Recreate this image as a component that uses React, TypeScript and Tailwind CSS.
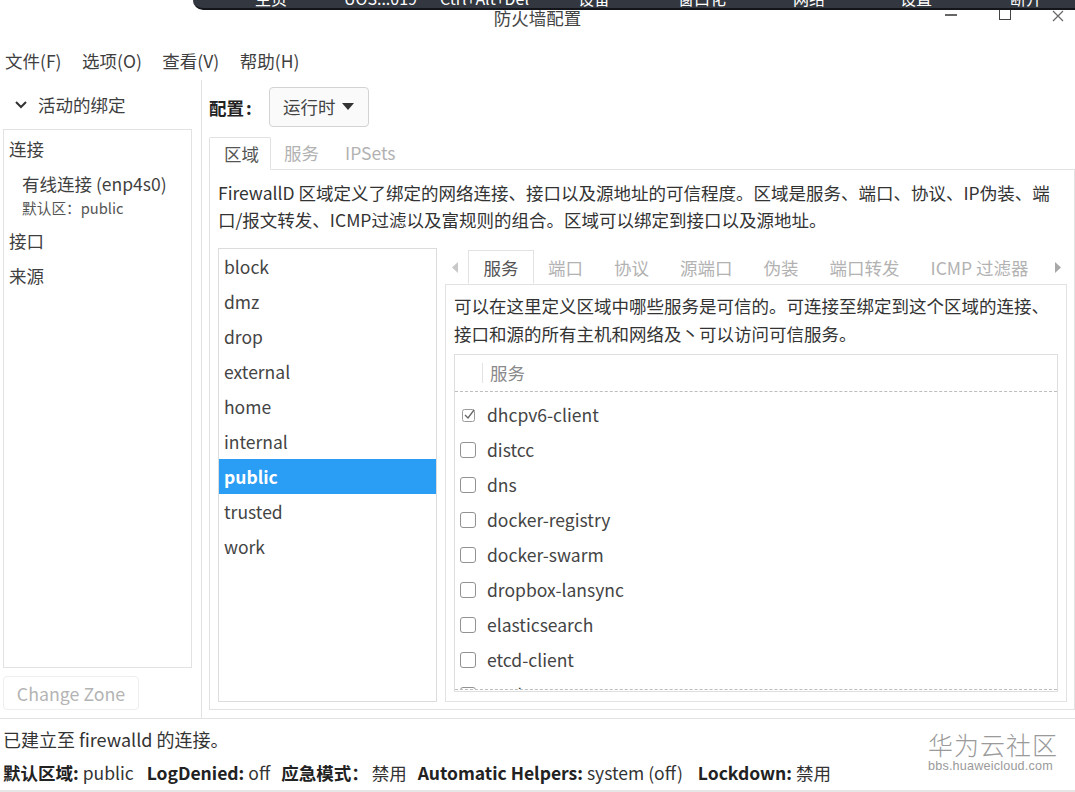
import React from "react";

const font = '"Noto Sans CJK SC", "Noto Sans", sans-serif';

const zones = ["block", "dmz", "drop", "external", "home", "internal", "public", "trusted", "work"];
const services = ["distcc", "dns", "docker-registry", "docker-swarm", "dropbox-lansync", "elasticsearch", "etcd-client"];
const topItems: [string, string][] = [
  ["主页", "w-[89px]"],
  ["UOS...019", "w-[96px]"],
  ["Ctrl+Alt+Del", "w-[138px]"],
  ["设备", "w-[100px]"],
  ["窗口化", "w-[115px]"],
  ["网络", "w-[107px]"],
  ["设置", "w-[110px]"],
  ["断开", "w-[60px]"],
];

function Box() {
  return <span className="w-[16px] h-[16px] rounded-[3px] border-[1.5px] border-[#929292] bg-white shrink-0" />;
}

export default function App() {
  return (
    <div
      className="relative w-[1075px] h-[792px] overflow-hidden bg-white text-[#3f3f3f] text-[17.5px] leading-[26px] flex flex-col"
      style={{ fontFamily: font }}
    >
      {/* remote-control bar overlapping the window */}
      <div className="absolute top-0 left-[193px] right-0 h-[10px] bg-[#33373f] rounded-bl-[10px] overflow-hidden z-10 border-b-2 border-[#14151a] pl-[62px] flex text-white text-[16px] leading-[16px]">
        {topItems.map(([t, w]) => (
          <span key={t} className={`${w} shrink-0 -mt-[10px]`}>{t}</span>
        ))}
      </div>

      {/* title bar */}
      <div className="h-[40px] shrink-0 relative flex justify-center pt-[5px] text-[#444]">
        <span>防火墙配置</span>
        <div className="absolute top-[14px] left-[945px] w-[12px] h-[1.5px] bg-[#666]" />
        <div className="absolute top-[9px] left-[999px] w-[12px] h-[11px] border border-[#444]" />
        <svg className="absolute top-[10px] left-[1052px]" width="12" height="12" viewBox="0 0 12 12">
          <path d="M1 1l10 10M11 1L1 11" stroke="#666" strokeWidth="1.2" fill="none" />
        </svg>
      </div>

      {/* menu bar */}
      <div className="h-[40px] shrink-0 flex items-center pl-[5px] gap-[20.5px] pt-[1px]">
        <span>文件(F)</span>
        <span>选项(O)</span>
        <span>查看(V)</span>
        <span>帮助(H)</span>
      </div>

      {/* main */}
      <div className="h-[638px] shrink-0 flex">
        {/* sidebar */}
        <div className="w-[202px] shrink-0 border-r border-[#e2e2e2] flex flex-col pl-[3px] pr-[9px] pb-[8px]">
          <div className="h-[49px] shrink-0 flex items-center pl-[11px] gap-[10px]">
            <svg width="14" height="10" viewBox="0 0 14 10">
              <path d="M2 2l5 5 5-5" stroke="#333" strokeWidth="2" fill="none" />
            </svg>
            <span>活动的绑定</span>
          </div>
          <div className="flex-1 border border-[#e2e2e2] pl-[5px] pt-[6px] flex flex-col">
            <div className="h-[26px]">连接</div>
            <div className="pl-[13px] mt-[9px] h-[26px]">有线连接 (enp4s0)</div>
            <div className="pl-[13px] text-[14.7px] leading-[22px] text-[#555]">默认区：public</div>
            <div className="mt-[9px] h-[26px]">接口</div>
            <div className="mt-[9px] h-[26px]">来源</div>
          </div>
          <div className="mt-[8px] w-[136px] h-[34px] shrink-0 rounded-[4px] border border-[#eeeeee] flex items-center justify-center text-[#b4b4b4] text-[17.8px]">
            Change Zone
          </div>
        </div>

        {/* right column */}
        <div className="flex-1 min-w-0 flex flex-col pl-[7px] pb-[8px]">
          <div className="h-[57px] shrink-0 flex items-center pb-[4px]">
            <span className="font-bold text-[#222] w-[60px] pt-[2px]">配置<span className="ml-[2px]">:</span></span>
            <div className="w-[100px] h-[40px] rounded-[4px] border border-[#d3d3d3] bg-[#fafafa] flex items-center pl-[13px] gap-[6px] text-[#444]">
              <span>运行时</span>
              <svg width="12" height="7" viewBox="0 0 12 7"><path d="M0 0h12L6 7z" fill="#333" /></svg>
            </div>
          </div>

          <div className="h-[32px] shrink-0 flex text-[#b2b2b2] relative z-[1]">
            <div className="w-[62px] h-[33px] border border-[#e2e2e2] border-b-white bg-white rounded-t-[2px] flex items-center pl-[14px] text-[#555]">区域</div>
            <span className="ml-[13px] mt-[3px]">服务</span>
            <span className="ml-[26px] mt-[3px]">IPSets</span>
          </div>

          <div className="flex-1 min-h-0 border border-[#e2e2e2] pl-[8px] pr-[7px] pb-[7px] flex flex-col">
            <p className="h-[78px] shrink-0 pt-[9px] leading-[27px] text-[#333] w-[842px]">
              FirewallD 区域定义了绑定的网络连接、接口以及源地址的可信程度。区域是服务、端口、协议、IP伪装、端口/报文转发、ICMP过滤以及富规则的组合。区域可以绑定到接口以及源地址。
            </p>
            <div className="flex-1 min-h-0 flex gap-[8px]">
              {/* zones */}
              <div className="w-[219px] shrink-0 border border-[#dcdcdc] flex flex-col">
                {zones.map((z) => (
                  <div
                    key={z}
                    className={
                      z === "public"
                        ? "h-[35px] shrink-0 flex items-center pl-[5px] bg-[#2a9df4] text-white font-bold"
                        : "h-[35px] shrink-0 flex items-center pl-[5px] text-[#444]"
                    }
                  >
                    {z}
                  </div>
                ))}
              </div>

              {/* zone details */}
              <div className="flex-1 min-w-0 flex flex-col pt-[2px]">
                <div className="h-[34px] shrink-0 flex items-center text-[#b2b2b2] relative z-[1] whitespace-nowrap">
                  <svg className="ml-[7px]" width="6" height="11" viewBox="0 0 6 11"><path d="M6 0v11L0 5.5z" fill="#c8c8c8" /></svg>
                  <div className="ml-[10px] w-[66px] h-[34px] pt-[2px] border border-[#e2e2e2] border-b-white bg-white flex items-center justify-center text-[#555]">服务</div>
                  <span className="ml-[14px] mt-[2px]">端口</span>
                  <span className="ml-[31px] mt-[2px]">协议</span>
                  <span className="ml-[31px] mt-[2px]">源端口</span>
                  <span className="ml-[31px] mt-[2px]">伪装</span>
                  <span className="ml-[31px] mt-[2px]">端口转发</span>
                  <span className="ml-[31px] mt-[2px]">ICMP 过滤器</span>
                  <svg className="ml-[26px]" width="6" height="11" viewBox="0 0 6 11"><path d="M0 0v11l6-5.5z" fill="#a8a8a8" /></svg>
                </div>
                <div className="flex-1 min-h-0 border border-[#e2e2e2] pl-[8px] pr-[8px] pb-[9px] flex flex-col">
                  <p className="h-[69px] shrink-0 pt-[7px] leading-[28px] text-[#333] whitespace-nowrap">
                    可以在这里定义区域中哪些服务是可信的。可连接至绑定到这个区域的连接、
                    <br />
                    接口和源的所有主机和网络及丶可以访问可信服务。
                  </p>
                  <div className="relative flex-1 min-h-0 border border-[#dedede] overflow-hidden">
                    <div className="h-[37px] border-b border-dashed border-[#bdbdbd] pl-[27px] flex items-center">
                      <span className="h-[20px] border-l border-[#e2e2e2] pl-[7px] leading-[20px] text-[#8a8a8a]">服务</span>
                    </div>
                    <div className="h-[40px] flex items-center pl-[7px] gap-[11px] text-[#444] pt-[6px]">
                      <svg width="14" height="14" viewBox="0 0 14 14" className="shrink-0">
                        <rect x="0.5" y="1.5" width="12" height="12" rx="2" stroke="#9a9a9a" fill="#fff" />
                        <path d="M3 7l3 3 6-8" stroke="#666" strokeWidth="1.3" fill="none" />
                      </svg>
                      <span>dhcpv6-client</span>
                    </div>
                    {services.map((s) => (
                      <div key={s} className="h-[35px] flex items-center pl-[5px] gap-[11px] text-[#444]">
                        <Box />
                        <span>{s}</span>
                      </div>
                    ))}
                    <div className="h-[35px] flex items-center pl-[5px] gap-[11px] text-[#444]">
                      <Box />
                      <span>etcd-server</span>
                    </div>
                    <div className="absolute left-0 right-0 bottom-0 h-[2px] bg-white border-t border-dashed border-[#bdbdbd]" />
                  </div>
                </div>
              </div>
            </div>
          </div>
        </div>
      </div>

      {/* status */}
      <div className="relative flex-1 border-t border-[#e2e2e2] pl-[3px] flex flex-col">
        <div className="h-[39px] flex items-center text-[#333] text-[18px]">已建立至 firewalld 的连接。</div>
        <div className="flex items-center text-[#333] h-[26px] mt-[2px] whitespace-nowrap">
          <b className="text-[#222]">默认区域:</b><span className="ml-[4px]">public</span>
          <b className="text-[#222] ml-[13px]">LogDenied:</b><span className="ml-[4px]">off</span>
          <b className="text-[#222] ml-[11px]">应急模式：</b><span className="ml-[3px]">禁用</span>
          <b className="text-[#222] ml-[11px]">Automatic Helpers:</b><span className="ml-[4px]">system (off)</span>
          <b className="text-[#222] ml-[15px]">Lockdown:</b><span className="ml-[4px]">禁用</span>
        </div>
        <div className="absolute left-0 right-0 bottom-0 h-[2px] bg-[#e6e6e6]" />
        <div className="absolute left-[928px] top-[11px] w-[130px] text-[#9a9a9a]">
          <div className="text-[25px] leading-[28px] font-light tracking-[1px]">华为云社区</div>
          <div className="text-[12.6px] leading-[14px] mt-[1px] tracking-[0.2px]" style={{ fontFamily: '"Liberation Sans", sans-serif' }}>bbs.huaweicloud.com</div>
        </div>
      </div>
    </div>
  );
}
